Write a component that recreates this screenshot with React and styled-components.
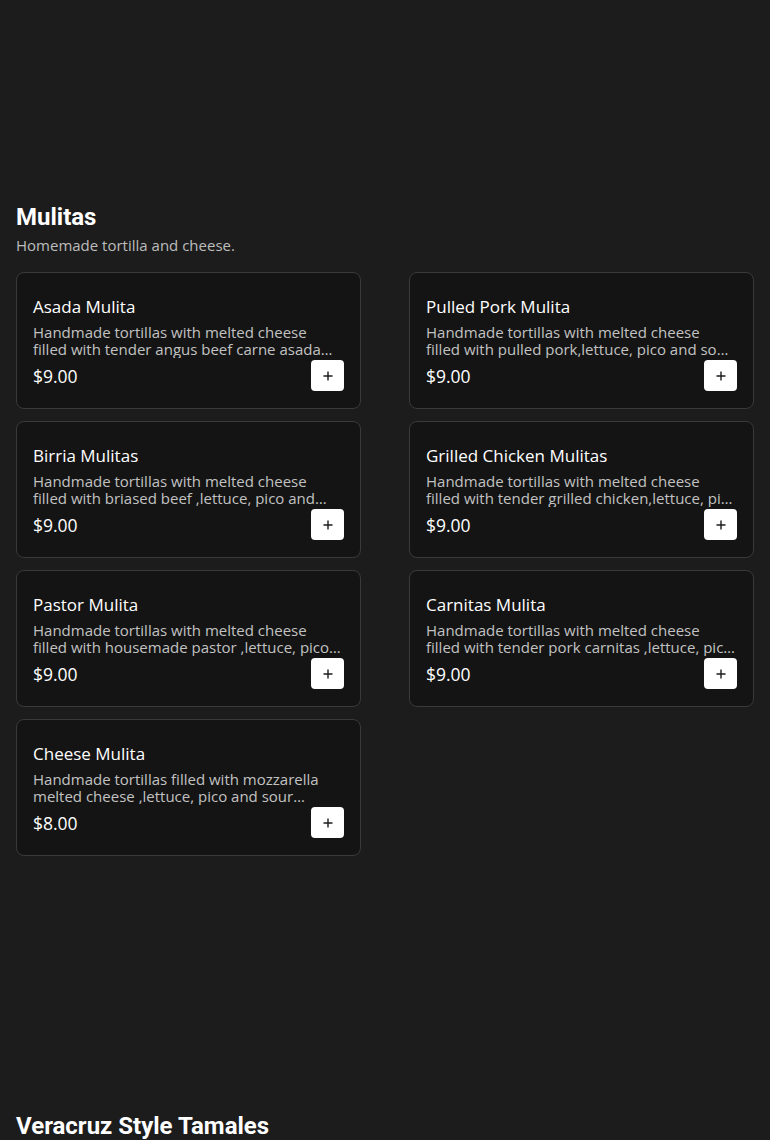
import styled, { createGlobalStyle } from 'styled-components';

const GlobalStyle = createGlobalStyle`
	body {
		margin: 0;
		background-color: #1c1c1c;
		font-family: 'Open Sans', 'Liberation Sans', sans-serif;
		color: #ffffff;
	}
`;

const items = [
	{
		name: 'Asada Mulita',
		desc: 'Handmade tortillas with melted cheese filled with tender angus beef carne asada ,lettuce, pico and sour cream.',
		price: '$9.00',
	},
	{
		name: 'Pulled Pork Mulita',
		desc: 'Handmade tortillas with melted cheese filled with pulled pork,lettuce, pico and sour cream.',
		price: '$9.00',
	},
	{
		name: 'Birria Mulitas',
		desc: 'Handmade tortillas with melted cheese filled with briased beef ,lettuce, pico and sour cream.',
		price: '$9.00',
	},
	{
		name: 'Grilled Chicken Mulitas',
		desc: 'Handmade tortillas with melted cheese filled with tender grilled chicken,lettuce, pico and sour cream.',
		price: '$9.00',
	},
	{
		name: 'Pastor Mulita',
		desc: 'Handmade tortillas with melted cheese filled with housemade pastor ,lettuce, pico and sour cream.',
		price: '$9.00',
	},
	{
		name: 'Carnitas Mulita',
		desc: 'Handmade tortillas with melted cheese filled with tender pork carnitas ,lettuce, pico and sour cream.',
		price: '$9.00',
	},
	{
		name: 'Cheese Mulita',
		desc: 'Handmade tortillas filled with mozzarella melted cheese ,lettuce, pico and sour cream.',
		price: '$8.00',
	},
];

const PlusIcon = () => (
	<svg width='12' height='12' viewBox='0 0 12 12'>
		<path d='M6 1.5v9M1.5 6h9' stroke='#1c1c1c' strokeWidth='1.4' />
	</svg>
);

const MenuItem = ({ item }) => (
	<Card>
		<ItemName>{item.name}</ItemName>
		<ItemDesc>{item.desc}</ItemDesc>
		<BottomRow>
			<Price>{item.price}</Price>
			<AddButton aria-label='add'>
				<PlusIcon />
			</AddButton>
		</BottomRow>
	</Card>
);

const App = () => {
	return (
		<>
			<GlobalStyle />
			<Page>
				<Section>
					<SectionTitle>Mulitas</SectionTitle>
					<SectionSub>Homemade tortilla and cheese.</SectionSub>
					<Grid>
						{items.map((item) => (
							<MenuItem key={item.name} item={item} />
						))}
					</Grid>
				</Section>
				<Section>
					<SectionTitle>Veracruz Style Tamales</SectionTitle>
				</Section>
			</Page>
		</>
	);
};

const Page = styled.div`
	padding: 203px 16px 0 16px;
	display: flex;
	flex-direction: column;
	gap: 256px;
`;

const Section = styled.section`
	display: flex;
	flex-direction: column;
`;

const SectionTitle = styled.h2`
	margin: 0;
	font-family: Roboto, 'Liberation Sans', sans-serif;
	font-weight: 700;
	font-size: 24px;
	line-height: 28px;
	color: #ffffff;
`;

const SectionSub = styled.p`
	margin: 5px 0 0 0;
	font-size: 15px;
	line-height: 18px;
	color: #bdbdbd;
`;

const Grid = styled.div`
	margin-top: 18px;
	display: grid;
	grid-template-columns: 1fr 1fr;
	column-gap: 48px;
	row-gap: 12px;
`;

const Card = styled.div`
	display: flex;
	flex-direction: column;
	padding: 22px 16px 17px 16px;
	background-color: #141414;
	border: 1px solid #3a3a3a;
	border-radius: 8px;
`;

const ItemName = styled.h3`
	margin: 0;
	font-size: 17px;
	line-height: 24px;
	font-weight: 500;
	color: #ffffff;
`;

const ItemDesc = styled.p`
	margin: 5px 0 0 0;
	font-size: 15px;
	line-height: 17px;
	color: #c2c2c2;
	display: -webkit-box;
	-webkit-line-clamp: 2;
	-webkit-box-orient: vertical;
	overflow: hidden;
`;

const BottomRow = styled.div`
	margin-top: 2px;
	display: flex;
	justify-content: space-between;
	align-items: center;
`;

const Price = styled.span`
	font-size: 17.5px;
	line-height: 20px;
	color: #ffffff;
`;

const AddButton = styled.button`
	width: 33px;
	height: 31px;
	padding: 0;
	border: none;
	border-radius: 4px;
	background-color: #ffffff;
	display: flex;
	align-items: center;
	justify-content: center;
	cursor: pointer;
`;

export default App;
